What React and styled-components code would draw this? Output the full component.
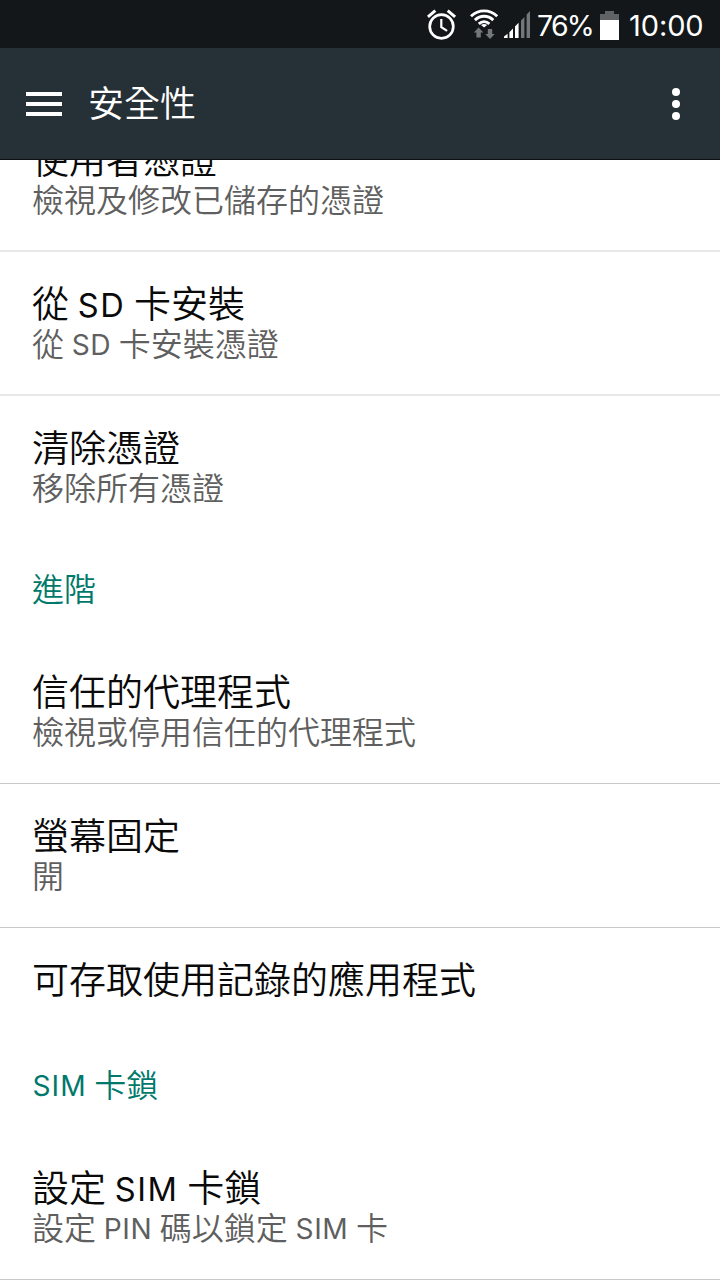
import React from 'react';
import styled, { createGlobalStyle } from 'styled-components';

const GlobalStyle = createGlobalStyle`
  * {
    box-sizing: border-box;
  }
  body {
    margin: 0;
    background: #fff;
    font-family: "Noto Sans CJK TC", sans-serif;
    overflow: hidden;
  }
`;

const settings = [
  { title: '使用者憑證', summary: '檢視及修改已儲存的憑證', divider: 'soft' },
  { title: '從 SD 卡安裝', summary: '從 SD 卡安裝憑證', divider: 'soft' },
  { title: '清除憑證', summary: '移除所有憑證' },
  { section: '進階' },
  { title: '信任的代理程式', summary: '檢視或停用信任的代理程式', divider: 'thin' },
  { title: '螢幕固定', summary: '開', divider: 'thin' },
  { title: '可存取使用記錄的應用程式' },
  { section: 'SIM 卡鎖' },
  { title: '設定 SIM 卡鎖', summary: '設定 PIN 碼以鎖定 SIM 卡', divider: 'thin' },
];

const dividers = {
  soft: '2px solid #e6e8e7',
  thin: '1px solid #c8c8c8',
};

// latin words get their own face and tracking
function Mixed({ text }) {
  return text.split(/([A-Z]+)/).map((part, i) =>
    /[A-Z]/.test(part) ? <Latin key={i}>{part}</Latin> : part
  );
}

function AlarmIcon() {
  return (
    <svg width="30" height="32" viewBox="0 0 30 32" fill="none" stroke="#fff" strokeWidth="2.7">
      <circle cx="14.5" cy="18.5" r="11.8" />
      <path d="M.9 8.9 8.3 2.7M28.1 8.9 20.7 2.7" strokeWidth="3" />
      <path d="M14.3 11V19.1L20.1 22.9" strokeWidth="2.2" />
    </svg>
  );
}

function WifiIcon() {
  return (
    <svg width="30" height="32" viewBox="0 0 30 32" fill="none" stroke="#fff" strokeWidth="2.9">
      <path d="M1 8.2C8.6 1.1 19.6 1.1 27.2 8.2" />
      <path d="M4.9 12.1C10.4 7 17.8 7 23.3 12.1" />
      <path d="M8.8 15.9C12 13 16.2 13 19.4 15.9" />
      <path d="M11 17Q14.1 14.8 17.2 17L14.1 19.6Z" fill="#fff" stroke="none" />
      <path d="M8.6 19.6 13.4 24.6H10.8V29.6H6.4V24.6H3.8Z" fill="#74777a" stroke="none" />
      <path d="M20 31 15.2 26H17.8V21H22.2V26H24.8Z" fill="#74777a" stroke="none" />
    </svg>
  );
}

function SignalIcon() {
  return (
    <svg width="28" height="30" viewBox="0 0 28 30">
      <path d="M0 29V27.5L3.6 24.8V29ZM5.4 29V23.2L9 19.4V29ZM11 29V17.6L14.6 13.8V29Z" fill="#fff" />
      <path d="M17 29V11.6L20.4 8V29ZM22.6 29V5.6L26 2V29Z" fill="#74777a" />
    </svg>
  );
}

function BatteryIcon() {
  return (
    <svg width="19" height="29" viewBox="0 0 19 29" shapeRendering="crispEdges">
      <path d="M5 0H14V3H19V9H0V3H5Z" fill="#606365" />
      <path d="M0 9H19V29H0Z" fill="#fff" />
    </svg>
  );
}

function App() {
  return (
    <Screen>
      <GlobalStyle />
      <StatusBar>
        <AlarmIcon />
        <WifiSlot><WifiIcon /></WifiSlot>
        <SignalIcon />
        <Percent>76%</Percent>
        <BatterySlot><BatteryIcon /></BatterySlot>
        <Clock>10:00</Clock>
      </StatusBar>
      <Toolbar>
        <MenuButton aria-label="選單"><i /><i /><i /></MenuButton>
        <PageTitle>安全性</PageTitle>
        <MoreButton aria-label="更多"><i /><i /><i /></MoreButton>
      </Toolbar>
      <Viewport>
        <List>
          {settings.map((row) =>
            row.section ? (
              <Section key={row.section}><Mixed text={row.section} /></Section>
            ) : (
              <Item key={row.title} $divider={row.divider}>
                <Title><Mixed text={row.title} /></Title>
                {row.summary && <Summary><Mixed text={row.summary} /></Summary>}
              </Item>
            )
          )}
        </List>
      </Viewport>
    </Screen>
  );
}

const Screen = styled.div`
  display: flex;
  flex-direction: column;
  width: 720px;
  height: 1280px;
  overflow: hidden;
`;

const StatusBar = styled.div`
  display: flex;
  align-items: center;
  justify-content: flex-end;
  height: 48px;
  flex: none;
  padding-right: 16px;
  background: #131719;
  color: #fff;
  font-family: Inter, sans-serif;
  font-size: 29px;
  line-height: 46px;
  svg {
    flex: none;
  }
`;

const WifiSlot = styled.div`
  display: flex;
  margin: 0 4px 0 13px;
`;

const BatterySlot = styled.div`
  display: flex;
  padding-top: 2px;
`;

const Percent = styled.span`
  width: 58px;
  margin: 0 5px 0 5px;
  padding-top: 3px;
  white-space: nowrap;
  font-size: 28.5px;
  letter-spacing: -1.8px;
`;

const Clock = styled.span`
  width: 75px;
  margin-left: 10px;
  padding-top: 3px;
  white-space: nowrap;
  letter-spacing: -0.1px;
`;

const Toolbar = styled.header`
  display: flex;
  align-items: center;
  height: 112px;
  flex: none;
  padding: 0 40px 0 26px;
  background: #263137;
  border-bottom: 1px solid #0c1012;
  color: #fff;
`;

const MenuButton = styled.button`
  display: flex;
  flex-direction: column;
  gap: 6px;
  padding: 0;
  border: 0;
  background: none;
  i {
    width: 36px;
    height: 4px;
    background: #fff;
  }
`;

const MoreButton = styled(MenuButton)`
  gap: 4px;
  margin-left: auto;
  i {
    width: 8px;
    height: 8px;
    border-radius: 50%;
  }
`;

const PageTitle = styled.h1`
  margin: 0 0 5px 26px;
  font-size: 36px;
  font-weight: 350;
  line-height: 48px;
`;

const Viewport = styled.main`
  flex: 1;
  min-height: 0;
  overflow: hidden;
`;

/* scrolled part of the way into the first row */
const List = styled.div`
  margin-top: -52px;
  font-weight: 350;
`;

const Item = styled.div`
  height: ${(p) => (p.$divider ? '144px' : 'auto')};
  padding: 27px 32px ${(p) => (p.$divider ? 0 : '35px')};
  border-bottom: ${(p) => dividers[p.$divider] || '0'};
`;

const Title = styled.div`
  height: 46px;
  color: #0a0a0a;
  font-size: 37px;
  line-height: 46px;
  white-space: nowrap;
  span {
    letter-spacing: 1.6px;
  }
`;

const Summary = styled.div`
  height: 36px;
  color: #5f5f5f;
  font-size: 32px;
  line-height: 34px;
  white-space: nowrap;
  span {
    letter-spacing: 0.6px;
  }
`;

const Section = styled.div`
  height: 100px;
  padding: 0 32px;
  color: #00796b;
  font-size: 32px;
  line-height: 94px;
`;

const Latin = styled.span`
  margin: 0 0.5px;
  font-family: Inter, sans-serif;
  font-size: 0.88em;
  font-weight: 400;
  line-height: 1;
  letter-spacing: 1px;
  vertical-align: 1px;
`;

export default App;
